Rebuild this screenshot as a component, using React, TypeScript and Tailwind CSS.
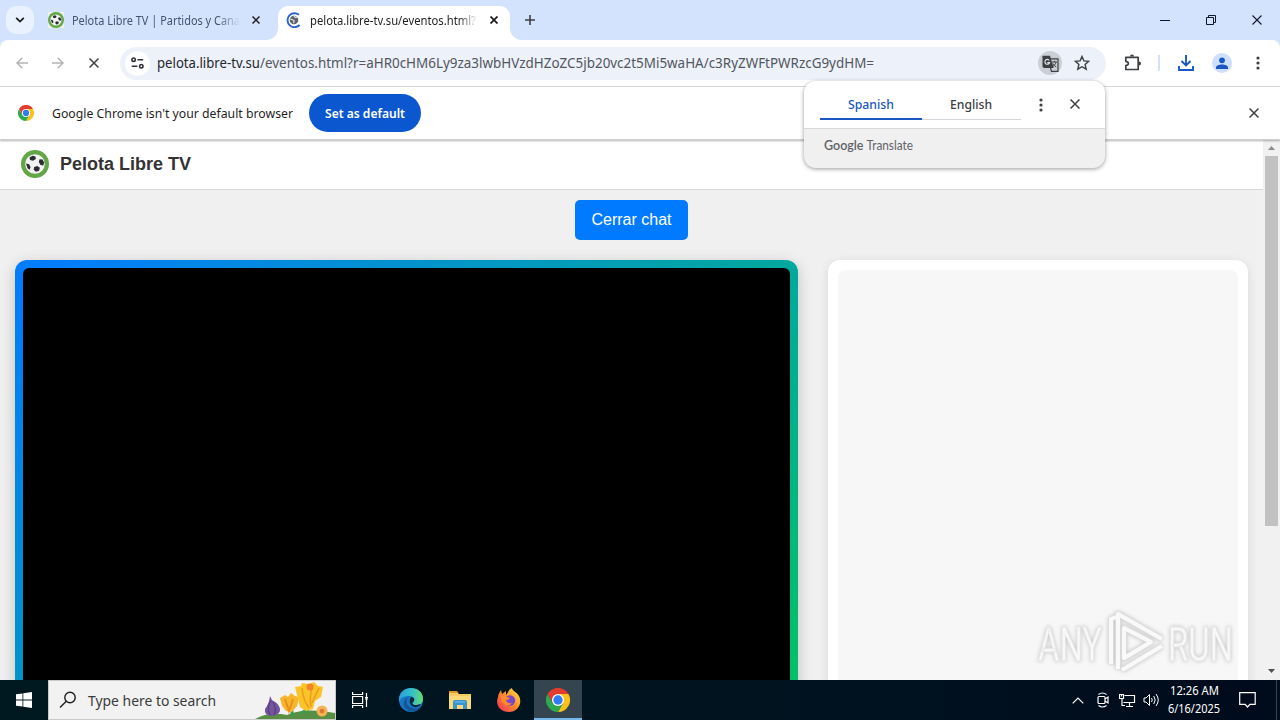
import type { ReactNode } from "react";

const ui = "font-['Noto_Sans',sans-serif]";

interface LabelProps {
  width: number;
  size: number;
  children: string;
  className?: string;
  weight?: number;
}

// Single-line label fitted to a fixed advance width
function Label({ width, size, children, className = "", weight = 400 }: LabelProps) {
  const height = Math.round(size * 1.5);
  return (
    <svg width={width + 2} height={height} className={`shrink-0 overflow-visible ${ui} ${className}`}>
      <text
        x="0"
        y={Math.round(height * 0.74)}
        fontSize={size}
        fontWeight={weight}
        fill="currentColor"
        textLength={width}
        lengthAdjust="spacingAndGlyphs"
      >
        {children}
      </text>
    </svg>
  );
}

function CloseIcon({ size = 8, className = "", stroke = 1.5 }: { size?: number; className?: string; stroke?: number }) {
  return (
    <svg width={size} height={size} viewBox={`0 0 ${size} ${size}`} className={`shrink-0 ${className}`} stroke="currentColor" strokeWidth={stroke}>
      <path d={`M.5 .5L${size - 0.5} ${size - 0.5}M${size - 0.5} .5L.5 ${size - 0.5}`} />
    </svg>
  );
}

function BallIcon({ size }: { size: number }) {
  return (
    <svg width={size} height={size} viewBox="0 0 28 28" className="shrink-0">
      <circle cx="14" cy="14" r="14" fill="#63a646" />
      <circle cx="14" cy="14" r="9.800" fill="#f3f3f4" />
      <g fill="#2b2b35">
        <path d="M8.500 7.500l3-1.700 3 .7.300 2.500-2.800 1.800-3-.8z" />
        <path d="M18.500 9.200l3 .3 1.600 3-.8 3-2.800-.5-1.700-3z" />
        <path d="M5 13.500l3.200.7 1.400 3-1 2.600-2.100-1.500z" />
        <path d="M13.200 17l3.100-1 2.600 1.800-.8 3-3.200 1-2.200-2z" />
      </g>
    </svg>
  );
}

function ChromeLogo({ size }: { size: number }) {
  return (
    <svg width={size} height={size} viewBox="0 0 24 24" className="shrink-0">
      <path d="M12 6h10.400A12 12 0 0 1 12 24l5.200-9z" fill="#fbc116" />
      <path d="M1.600 6A12 12 0 0 0 12 24l5.200-9L12 12 6.800 15z" fill="#2da94f" />
      <path d="M1.600 6l5.200 9L12 6h10.400A12 12 0 0 0 1.600 6z" fill="#e33b2e" />
      <circle cx="12" cy="12" r="6" fill="#fff" />
      <circle cx="12" cy="12" r="4.700" fill="#307cf1" />
    </svg>
  );
}

function DotsIcon() {
  return (
    <svg width="4" height="14" viewBox="0 0 4 14" className="shrink-0" fill="#3c4043">
      <circle cx="2" cy="2" r="1.600" />
      <circle cx="2" cy="7" r="1.600" />
      <circle cx="2" cy="12" r="1.600" />
    </svg>
  );
}

function TabStrip() {
  return (
    <div className="flex h-10 shrink-0 bg-[#d3e3fd] text-[#1f1f1f]">
      <div className="mt-1.5 ml-1.5 flex h-7 w-7 items-center justify-center rounded-[10px] bg-[#e9f0fe]">
        <svg width="10" height="6" viewBox="0 0 10 6" fill="none" stroke="#1f1f1f" strokeWidth="1.800">
          <path d="M1.200 .8L5 4.600 8.800 .8" />
        </svg>
      </div>
      <div className="ml-[14px] flex w-[218px] items-center">
        <div className="flex h-4 w-4 items-center justify-center bg-[#eaf2ea]">
          <BallIcon size={16} />
        </div>
        <div className="mt-0.5 ml-2 w-[168px] text-[#44546f] [mask-image:linear-gradient(to_right,black_146px,transparent_168px)]">
          <Label width={168} size={12}>Pelota Libre TV | Partidos y Cana</Label>
        </div>
        <CloseIcon className="ml-3" />
      </div>
      <svg width="12" height="40" viewBox="0 0 12 40" className="shrink-0">
        <path d="M0 40a12 12 0 0 0 12-12v12z" fill="#fff" />
      </svg>
      <div className="mt-1.5 flex h-[34px] w-[232px] items-center rounded-t-[10px] bg-white pb-1.5">
        <svg width="16" height="16" viewBox="0 0 16 16" className="ml-2 shrink-0">
          <path d="M13 2.800A7 7 0 1 0 13.600 13" fill="none" stroke="#2d62c8" strokeWidth="1.900" />
          <circle cx="8" cy="8" r="4.300" fill="#5f6368" />
          <path d="M4.200 7.200c1.500-.7 2 1.400 3.500 1 .9.900-.2 1.800.1 2.900M8 4l1.300 1.300 2-.1" stroke="#e3e5e8" strokeWidth="1.200" fill="none" />
        </svg>
        <div className="mt-0.5 ml-2 w-[168px] text-[#1f1f1f] [mask-image:linear-gradient(to_right,black_148px,transparent_168px)]">
          <Label width={166} size={12}>pelota.libre-tv.su/eventos.html?</Label>
        </div>
        <CloseIcon className="ml-3" stroke={1.8} />
      </div>
      <svg width="12" height="40" viewBox="0 0 12 40" className="shrink-0">
        <path d="M0 28a12 12 0 0 0 12 12H0z" fill="#fff" />
      </svg>
      <svg width="10" height="10" viewBox="0 0 10 10" className="mt-[15px] ml-[3px] shrink-0" stroke="#3c4043" strokeWidth="1.600">
        <path d="M5 0v10M0 5h10" />
      </svg>
      <div className="mr-[18px] ml-auto flex items-center text-[#101828]">
        <svg width="10" height="10" viewBox="0 0 10 10" stroke="currentColor" className="mr-9">
          <path d="M0 5.500h10" />
        </svg>
        <svg width="10" height="10" viewBox="0 0 10 10" stroke="currentColor" fill="none" className="mr-9">
          <path d="M.5 2.500h7v7h-7zM2.500 2.500v-2h7v7h-2" />
        </svg>
        <CloseIcon size={10} stroke={1.1} />
      </div>
    </div>
  );
}

function TranslateBubble() {
  return (
    <div className="absolute top-[81px] left-[804px] z-20 h-[87px] w-[301px] overflow-hidden rounded-xl bg-[#f0f0f0] shadow-[0_1px_4px_rgba(0,0,0,0.4)]">
      <div className="flex h-[48px] items-start border-b border-[#d9d9d9] bg-white pl-4">
        <div className="mt-[7px] flex h-8 w-[102px] items-center justify-center border-b-2 border-[#1a57c2] pt-[3px] pl-0.5 text-[#1a57c2]">
          <Label width={46} size={12} weight={500}>Spanish</Label>
        </div>
        <div className="mt-[7px] flex h-8 w-[99px] items-center justify-center border-b border-[#d3d6da] pt-0.5 text-[#3c4043]">
          <Label width={42} size={12} weight={500}>English</Label>
        </div>
        <div className="mt-[17px] ml-[18px]">
          <DotsIcon />
        </div>
        <CloseIcon size={10} className="mt-[18px] ml-[27px] text-[#3c4043]" />
      </div>
      <div className="flex pt-[7px] pl-[20px] text-[#5f6368]">
        <svg width="92" height="18" className="overflow-visible font-['Lato',sans-serif]" fill="currentColor">
          <text x="0" y="13.500" fontSize="12.500" fontWeight="600" textLength="39.500" lengthAdjust="spacingAndGlyphs">Google</text>
          <text x="42.500" y="13.500" fontSize="12.500" textLength="46.500" lengthAdjust="spacingAndGlyphs">Translate</text>
        </svg>
      </div>
    </div>
  );
}

function Toolbar() {
  return (
    <div className="h-[47px] shrink-0 bg-[#d3e3fd]">
      <div className="flex h-full items-center rounded-t-lg border-b border-[#dadce0] bg-white">
        <svg width="12" height="12" viewBox="0 0 12 12" className="ml-4 shrink-0" fill="none" stroke="#b0b2b5" strokeWidth="1.400">
          <path d="M12 6H1M6.300 .7L1 6l5.300 5.300" />
        </svg>
        <svg width="12" height="12" viewBox="0 0 12 12" className="ml-6 shrink-0" fill="none" stroke="#b0b2b5" strokeWidth="1.400">
          <path d="M0 6h11M5.700 .7L11 6l-5.300 5.300" />
        </svg>
        <CloseIcon size={10} className="ml-[25px] text-[#3c4043]" />
        <div className="ml-[21px] flex h-[33px] w-[986px] shrink-0 items-center rounded-full bg-[#edf1fa]">
          <div className="ml-[5px] flex h-[25px] w-[25px] items-center justify-center rounded-full bg-white">
            <svg width="13" height="12" viewBox="0 0 13 12" fill="none" stroke="#303338" strokeWidth="1.600">
              <circle cx="2.600" cy="2.700" r="1.700" />
              <circle cx="10.300" cy="9.200" r="1.700" />
              <path d="M6.500 2.700h5.700M.7 9.200h5.700" />
            </svg>
          </div>
          <svg width="728" height="22" className={`ml-[6px] shrink-0 overflow-visible ${ui}`}>
            <text x="1" y="16" fontSize="14" fill="#24272c" textLength="103" lengthAdjust="spacingAndGlyphs">pelota.libre-tv.su</text>
            <text x="104" y="16" fontSize="14" fill="#52565d" textLength="614" lengthAdjust="spacingAndGlyphs">/eventos.html?r=aHR0cHM6Ly9za3lwbHVzdHZoZC5jb20vc2t5Mi5waHA/c3RyZWFtPWRzcG9ydHM=</text>
          </svg>
          <div className="mr-3 ml-auto flex h-6 w-6 items-center justify-center rounded-full bg-[#cbced5]">
            <svg width="17" height="17" viewBox="0 0 17 17">
              <path d="M1 .7h7l3.700 12.300H1.800L.5 11.700V1.200z" fill="#3c4043" />
              <path d="M8 3.800h8v12.500H9.500l-1-3.300" fill="none" stroke="#3c4043" strokeWidth="1.200" />
              <path d="M7.300 5.500A2.400 2.400 0 1 0 7.600 7.600H5.300" stroke="#e2e4e8" fill="none" strokeWidth="1.200" />
              <path d="M10 7h5M12.500 5.800V7M14 7.200c-.5 2-1.800 3.400-3.500 4.600M11 8.500c.7 1.500 1.900 2.700 3.200 3.500" stroke="#3c4043" fill="none" />
            </svg>
          </div>
          <svg width="16" height="16" viewBox="0 0 16 16" fill="none" stroke="#3c4043" strokeWidth="1.400" className="mr-4">
            <path d="M8 1.500l1.900 4.400 4.800.4-3.600 3.200 1.100 4.700L8 11.700l-4.200 2.500 1.100-4.700L1.300 6.300l4.800-.4z" />
          </svg>
        </div>
        <svg width="18" height="18" viewBox="0 0 18 18" fill="none" stroke="#3c4043" strokeWidth="1.700" className="ml-[18px] shrink-0">
          <path d="M1.800 3.300h12.400v12.200H1.800v-4q2.600-.6 2.600-2.100T1.800 7.300z" strokeLinejoin="round" />
          <path d="M6 2.500a2 2 0 0 1 4 0zM15 7.400a2 2 0 0 1 0 4z" fill="#3c4043" stroke="none" />
        </svg>
        <div className="ml-[16px] h-4 w-0.5 bg-[#d3e3fd]" />
        <svg width="16" height="16" viewBox="0 0 16 16" fill="none" stroke="#1a57c2" strokeWidth="1.900" className="ml-[18px] shrink-0">
          <path d="M8 0v10M3.500 6L8 10.500 12.500 6M1 11v4h14v-4" />
        </svg>
        <div className="ml-[18px] flex h-5 w-5 items-center justify-center rounded-full bg-[#cfe0fd]">
          <svg width="12" height="13" viewBox="0 0 12 13" fill="#1a57c2">
            <circle cx="6" cy="3.300" r="2.900" />
            <path d="M0 12v-1.500C0 8.500 3 7.500 6 7.500s6 1 6 3V12z" />
          </svg>
        </div>
        <div className="ml-[24px]">
          <DotsIcon />
        </div>
      </div>
    </div>
  );
}

function InfoBar() {
  return (
    <div className="relative z-10 flex h-[53px] shrink-0 items-center border-b border-[#d0d0d0] bg-white shadow-[0_1px_2px_rgba(0,0,0,0.3)]">
      <div className="ml-[18px]">
        <ChromeLogo size={16} />
      </div>
      <Label width={241} size={13} className="ml-[18px] text-[#1f1f1f]">Google Chrome isn't your default browser</Label>
      <div className="ml-[14px] flex h-[38px] w-[112px] items-center justify-center rounded-full bg-[#0b57d0] pl-0.5 text-white">
        <Label width={80} size={12.5} weight={600}>Set as default</Label>
      </div>
      <CloseIcon size={10} className="mr-[21px] ml-auto text-[#3c4043]" />
    </div>
  );
}

function Watermark() {
  return (
    <svg width="200" height="66" viewBox="0 0 200 66" className="absolute right-[44px] bottom-[6px] z-10 overflow-visible font-['Roboto',sans-serif] drop-shadow-[0_0_2px_rgba(0,0,0,0.22)]">
      <g fill="#f8f8f8" stroke="#e6e6e6" strokeWidth=".8" fontSize="49">
        <text x="2" y="53" textLength="64" lengthAdjust="spacingAndGlyphs">ANY</text>
        <text x="132" y="53" textLength="65" lengthAdjust="spacingAndGlyphs">RUN</text>
      </g>
      <g fill="none" strokeLinejoin="round">
        <path d="M82 61V6L126 31M86 62L126 38M75 56V11l5-2M88 50V20l27 14z" stroke="#dedede" strokeWidth="5.500" />
        <path d="M82 61V6L126 31M86 62L126 38M75 56V11l5-2M88 50V20l27 14z" stroke="#f9f9f9" strokeWidth="4" />
      </g>
    </svg>
  );
}

function Page() {
  return (
    <div className="flex h-[540px] shrink-0 bg-[#f0f0f0]">
      <div className="flex w-[1263px] flex-col overflow-hidden">
        <header className="flex h-[50px] shrink-0 items-center gap-[11px] border-b border-[#d8d8d8] bg-white pb-0.5 pl-[21px]">
          <BallIcon size={28} />
          <h1 className="font-['Liberation_Sans',sans-serif] text-lg font-bold text-[#333]">Pelota Libre TV</h1>
        </header>
        <button className="mx-auto mt-2.5 h-10 w-[113px] shrink-0 rounded-[5px] bg-[#007bff] font-['Liberation_Sans',sans-serif] text-base text-white">
          Cerrar chat
        </button>
        <main className="mt-5 flex items-start gap-[30px] pl-[15px]">
          <div className="h-[500px] w-[783px] shrink-0 rounded-xl bg-[linear-gradient(135deg,#007bff,#00c65e)] p-2 shadow-[0_4px_15px_rgba(0,0,0,0.2)]">
            <div className="h-full rounded-md bg-black" />
          </div>
          <div className="h-[500px] w-[420px] shrink-0 rounded-xl bg-white p-2.5 shadow-[0_2px_10px_rgba(0,0,0,0.1)]">
            <div className="h-full rounded-lg bg-[#f7f7f7]" />
          </div>
        </main>
      </div>
      <div className="flex w-[17px] flex-col items-center bg-[#f1f1f1]">
        <svg width="7" height="4" viewBox="0 0 7 4" className="mt-[6px] shrink-0" fill="#8c8c8c">
          <path d="M0 4L3.500 0 7 4z" />
        </svg>
        <div className="mt-[6px] h-[370px] w-[13px] shrink-0 bg-[#c1c1c1]" />
        <svg width="7" height="4" viewBox="0 0 7 4" className="mt-auto mb-[7px]" fill="#505050">
          <path d="M0 0L3.500 4 7 0z" />
        </svg>
      </div>
    </div>
  );
}

function Flowers() {
  return (
    <svg width="80" height="38" viewBox="0 2 80 38" className="absolute right-0 bottom-0">
      <path d="M0 40q14-8 32-4Q49 28 80 34v6z" fill="#588f45" />
      <path d="M37 37q1-5-3-11M53 34q-2-6-6-9M46 34q6-2 10-10" stroke="#3f9b4c" strokeWidth="3" fill="none" />
      <path d="M15 17l2 4q9 5 8 11-2 5-9 5-7-1-6-7 4-5 5-13z" fill="#73549d" />
      <path d="M16 22q-5 7-1 14M18 23q4 7 1 13" stroke="#503977" fill="none" />
      <path d="M25 19l5-3 3 2 3-4 4 3 4 1-2 9-5 6-6-1-4-5z" fill="#f7b52b" />
      <path d="M30 20l4 12 4-12" stroke="#ea901e" strokeWidth="2" fill="none" />
      <g transform="translate(-1 0)">
        <path d="M41 8l6-1 1-3 7 1 5-2 4 4 5 1-2 10-6 4-2 8-7 2-6-4-2-8z" fill="#fac32a" />
        <path d="M48 9q1 12 7 20M59 6q-4 11-2 22M65 9q-3 6-7 15" stroke="#eb9c1a" strokeWidth="1.500" fill="none" />
        <circle cx="56" cy="8" r="3.500" fill="#ee8629" />
      </g>
      <circle cx="67" cy="32" r="5.500" fill="#f5b353" />
      <circle cx="67" cy="32" r="2.300" fill="#d97831" />
    </svg>
  );
}

function TaskItem({ children, active = false }: { children: ReactNode; active?: boolean }) {
  return (
    <div className={`flex h-full items-center justify-center ${active ? "w-12 border-b-2 border-[#76b9ed] bg-[#35454f] pt-0.5" : "w-[49px]"}`}>
      {children}
    </div>
  );
}

function Taskbar() {
  return (
    <div className="flex h-10 shrink-0 items-center bg-[linear-gradient(to_right,#001820,#00131f_60%,#000b1c)] text-white">
      <div className="flex w-12 justify-center">
        <svg width="16" height="16" viewBox="0 0 16 16" fill="#fff">
          <path d="M0 2.300l6.500-.9v6.200H0zM7.300 1.300L16 0v7.600H7.300zM0 8.400h6.500v6.200L0 13.700zM7.300 8.400H16V16l-8.700-1.300z" />
        </svg>
      </div>
      <div className="relative flex h-full w-[288px] items-center border border-[#c9c9c9] bg-[#f2f2f2]">
        <svg width="18" height="18" viewBox="0 0 18 18" className="ml-[10px]" fill="none" stroke="#1f1f1f" strokeWidth="1.400">
          <circle cx="11" cy="6.500" r="5.200" />
          <path d="M7.300 10.200L1 16.500" />
        </svg>
        <Label width={128} size={15} className="ml-[11px] text-[#3b3b3b]">Type here to search</Label>
        <Flowers />
      </div>
      <TaskItem>
        <svg width="17" height="16" viewBox="0 0 17 16" fill="none" stroke="#fff" strokeWidth="1.200">
          <path d="M.6 0v2.500h10V0M.6 16v-2.500h10V16M.6 4.500h10v7H.6zM14.500 1v14" />
          <path d="M13 5.500h3M13 7h3" />
        </svg>
      </TaskItem>
      <div className="ml-[1px]" />
      <TaskItem>
        <svg width="24" height="24" viewBox="0 0 24 24">
          <defs>
            <linearGradient id="edgeTop">
              <stop stopColor="#279fe1" />
              <stop offset=".55" stopColor="#35bfc9" />
              <stop offset="1" stopColor="#67dd6c" />
            </linearGradient>
          </defs>
          <circle cx="12" cy="12" r="12" fill="#1677c9" />
          <path d="M0 11C1-4 24-3 24 11c0 5-4 6-7 6-4 0-4-2-3-3 3-3 0-6-4-6-5 0-9 2-10 6z" fill="url(#edgeTop)" />
          <path d="M10 9c-4 3-3 9 3 11 4 1 7 0 9-2-4 7-12 7-16 2-3-5-1-10 4-11z" fill="#155699" />
          <path d="M12 9c4 0 4 4 2 5-1 1-1 3 3 3 2 0 4-1 5-1-2 4-8 4-10 1-2-2-2-5 0-8z" fill="#0b2739" />
        </svg>
      </TaskItem>
      <TaskItem>
        <svg width="22" height="19" viewBox="0 0 22 19">
          <path d="M0 1h8l2 2h12v15H0z" fill="#f4cc62" />
          <path d="M0 0h8l1.500 2H0z" fill="#dc9828" />
          <path d="M0 5h22v13H0z" fill="#fad979" />
          <path d="M4 18v-7q0-2 2-2h10q2 0 2 2v7h-4v-4H8v4z" fill="#3b93cf" />
          <path d="M6 11h10" stroke="#71c2ec" />
        </svg>
      </TaskItem>
      <TaskItem>
        <svg width="24" height="24" viewBox="0 0 24 24">
          <defs>
            <linearGradient id="fox" x1="1" x2="0" y2="1">
              <stop stopColor="#ffe944" />
              <stop offset=".48" stopColor="#ff8c28" />
              <stop offset="1" stopColor="#ef2863" />
            </linearGradient>
          </defs>
          <path d="M4 2l1 4 4-3v4c3-4 3-6 6-7 0 3 5 4 7 8 4 8-2 16-10 16C3 24-2 17 1 9c0-3 2-5 3-7z" fill="url(#fox)" />
          <circle cx="13" cy="12.500" r="5.200" fill="#7847ce" />
          <path d="M4 8q4-1 6 1l3 1q-1 2-4 2 1 4 6 3-3 4-8 1-3-3-3-8z" fill="#ff8b25" />
        </svg>
      </TaskItem>
      <div className="ml-[1px]" />
      <TaskItem active>
        <ChromeLogo size={24} />
      </TaskItem>
      <div className="ml-auto flex h-full items-center">
        <svg width="12" height="7" viewBox="0 0 12 7" fill="none" stroke="#fff" strokeWidth="1.200">
          <path d="M.7 6.300L6 1l5.300 5.300" />
        </svg>
        <svg width="12" height="16" viewBox="0 0 12 16" className="ml-[13px]" fill="none" stroke="#fff" strokeWidth="1.200">
          <rect x="1" y="4.500" width="7" height="7" rx="1" />
          <path d="M8 7l3-2v6L8 9M1.500 2.500q4-3 8 0M1.500 13.500q4 3 8 0" />
        </svg>
        <svg width="17" height="15" viewBox="0 0 17 15" className="ml-[10px]" fill="none" stroke="#fff" strokeWidth="1.200">
          <path d="M5.500 2.500h10v7h-11M3 5v7.500h3M10.500 9.500v4M7 13.500h7M.5 1.500h4v4h-4zM2.500 1.500v2" />
        </svg>
        <svg width="17" height="14" viewBox="0 0 17 14" className="ml-[7px]" fill="none" stroke="#fff">
          <path d="M1 5h2l3.500-3.500v11L3 9H1zM8.500 5q1.500 2 0 4M10.700 3q3 4 0 8M13 1q4.500 6 0 12" />
        </svg>
        <div className="ml-[7px] flex w-[56px] flex-col items-center">
          <Label width={49} size={12}>12:26 AM</Label>
          <Label width={52} size={12}>6/16/2025</Label>
        </div>
        <svg width="17" height="16" viewBox="0 0 17 16" className="ml-[16px]" fill="none" stroke="#fff" strokeWidth="1.200">
          <path d="M.7 .7h15.500v11.600h-5.300L8.500 15l-2.400-2.700H.7z" />
        </svg>
        <div className="ml-[20px] mr-[3px] h-full w-px bg-[#3a4252]" />
      </div>
    </div>
  );
}

export default function App() {
  return (
    <div className="relative flex h-[720px] w-[1280px] flex-col overflow-hidden bg-white">
      <TabStrip />
      <Toolbar />
      <InfoBar />
      <Page />
      <Taskbar />
      <TranslateBubble />
      <div className="absolute right-0 bottom-10 w-[280px]">
        <Watermark />
      </div>
    </div>
  );
}
